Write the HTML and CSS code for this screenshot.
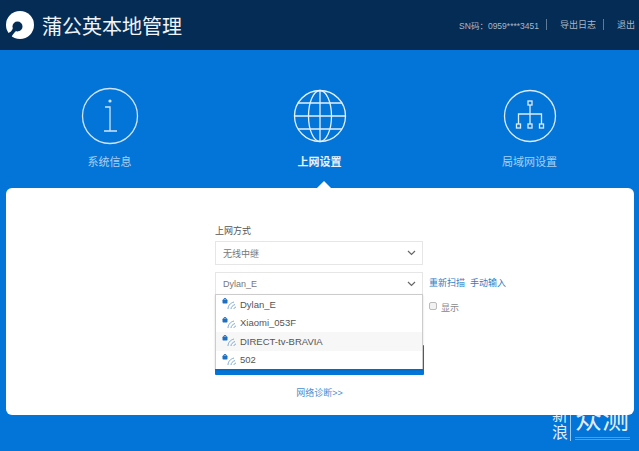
FILE: index.html
```html
<!DOCTYPE html>
<html lang="zh-CN">
<head>
    <meta charset="UTF-8">
    <meta name="viewport" content="width=device-width, initial-scale=1.0">
    <title>蒲公英本地管理</title>
    <link rel="stylesheet" href="styles.css">
</head>
<body>

<!-- 顶部栏 -->
<header class="topbar">
    <div class="brand">
        <svg class="logo" width="28" height="28" viewBox="0 0 28 28">
            <circle cx="14" cy="14" r="14" fill="#fff"/>
            <circle cx="11.500" cy="15.500" r="5" fill="#042c55"/>
            <path d="M7 17c-1 3-3 5-6.500 5.500L5 27c1-3 3-5 5-7z" fill="#042c55"/>
            <path d="M9 21c2 0 4 0 5-1-1 2-3 4-5 4z" fill="#fff"/>
        </svg>
        <span class="brand-name">蒲公英本地管理</span>
    </div>
    <div class="top-links">
        <span class="sn">SN码：0959****3451</span>
        <span class="sep"></span>
        <span>导出日志</span>
        <span class="sep"></span>
        <span>退出</span>
    </div>
</header>

<!-- 导航 -->
<nav class="nav">
    <div class="nav-item">
        <svg width="58" height="58" viewBox="0 0 58 58" fill="none" stroke="#cfe4f7" stroke-width="1.3">
            <circle cx="29" cy="29" r="27.500"/>
            <circle cx="29" cy="14" r="1.600" fill="#cfe4f7" stroke="none"/>
            <path d="M24 20h5v24M23 44h13"/>
        </svg>
        <span>系统信息</span>
    </div>
    <div class="nav-item active">
        <svg width="54" height="54" viewBox="0 0 54 54" fill="none" stroke="#e4f0fb" stroke-width="1.3">
            <circle cx="27" cy="27" r="25.500"/>
            <ellipse cx="27" cy="27" rx="11.500" ry="25.500"/>
            <path d="M27 1.500v51M1.500 27h51M5 14h44M5 40h44"/>
        </svg>
        <span>上网设置</span>
    </div>
    <div class="nav-item">
        <svg width="54" height="54" viewBox="0 0 54 54" fill="none" stroke="#dcebf9" stroke-width="1.3">
            <circle cx="27" cy="27" r="25.500"/>
            <rect x="25" y="12" width="4" height="4"/>
            <path d="M27 16v19M15.500 35v-10h23v10"/>
            <rect x="13.500" y="35" width="4" height="4"/>
            <rect x="25" y="35" width="4" height="4"/>
            <rect x="36.500" y="35" width="4" height="4"/>
        </svg>
        <span>局域网设置</span>
    </div>
</nav>

<!-- 主卡片 -->
<main class="card">
    <div class="form">
        <label class="field-label">上网方式</label>
        <div class="select">
            <span>无线中继</span>
            <svg class="chevron" width="9" height="6" viewBox="0 0 9 6"><path d="M1 1l3.500 3.500L8 1" fill="none" stroke="#666" stroke-width="1.200"/></svg>
        </div>

        <div class="wifi-box">
            <div class="select select-open">
                <span>Dylan_E</span>
                <svg class="chevron" width="9" height="6" viewBox="0 0 9 6"><path d="M1 1l3.500 3.500L8 1" fill="none" stroke="#666" stroke-width="1.200"/></svg>
            </div>
            <div class="side-links">
                <a>重新扫描</a>
                <a>手动输入</a>
            </div>

            <div class="password-row">
                <span class="checkbox"></span>
                <span>显示</span>
            </div>

            <button class="submit"></button>

            <ul class="dropdown">
                <li>
                    <svg class="wifi" width="17" height="13" viewBox="0 0 17 13"><rect x="0.500" y="2.500" width="5" height="4" rx="0.800" fill="#1f6fc0"/><path d="M1.600 2.800a1.400 1.400 0 0 1 2.800 0" fill="none" stroke="#1f6fc0" stroke-width="0.900"/><path d="M6 12c0-3 2-6 6-7M9 12c0-2 1.500-3.500 4-4.500M12 12c0-1 .5-1.500 2-2" fill="none" stroke="#7fa9d2" stroke-width="1"/></svg>
                    <span>Dylan_E</span>
                </li>
                <li>
                    <svg class="wifi" width="17" height="13" viewBox="0 0 17 13"><rect x="0.500" y="2.500" width="5" height="4" rx="0.800" fill="#1f6fc0"/><path d="M1.600 2.800a1.400 1.400 0 0 1 2.800 0" fill="none" stroke="#1f6fc0" stroke-width="0.900"/><path d="M6 12c0-3 2-6 6-7M9 12c0-2 1.500-3.500 4-4.500M12 12c0-1 .5-1.500 2-2" fill="none" stroke="#7fa9d2" stroke-width="1"/></svg>
                    <span>Xiaomi_053F</span>
                </li>
                <li class="hover">
                    <svg class="wifi" width="17" height="13" viewBox="0 0 17 13"><rect x="0.500" y="2.500" width="5" height="4" rx="0.800" fill="#1f6fc0"/><path d="M1.600 2.800a1.400 1.400 0 0 1 2.800 0" fill="none" stroke="#1f6fc0" stroke-width="0.900"/><path d="M6 12c0-3 2-6 6-7M9 12c0-2 1.500-3.500 4-4.500M12 12c0-1 .5-1.500 2-2" fill="none" stroke="#7fa9d2" stroke-width="1"/></svg>
                    <span>DIRECT-tv-BRAVIA</span>
                </li>
                <li>
                    <svg class="wifi" width="17" height="13" viewBox="0 0 17 13"><rect x="0.500" y="2.500" width="5" height="4" rx="0.800" fill="#1f6fc0"/><path d="M1.600 2.800a1.400 1.400 0 0 1 2.800 0" fill="none" stroke="#1f6fc0" stroke-width="0.900"/><path d="M6 12c0-3 2-6 6-7M9 12c0-2 1.500-3.500 4-4.500M12 12c0-1 .5-1.500 2-2" fill="none" stroke="#7fa9d2" stroke-width="1"/></svg>
                    <span>502</span>
                </li>
            </ul>
        </div>

        <a class="diag">网络诊断&gt;&gt;</a>
    </div>
</main>

<!-- 水印 -->
<div class="watermark">
    <div class="wm-small">新<br>浪</div>
    <div class="wm-big">众测</div>
</div>

</body>
</html>
```

FILE: styles.css
```css
* {
    box-sizing: border-box;
}
body {
    margin: 0;
    height: 451px;
    overflow: hidden;
    position: relative;
    background-color: #0475d8;
    font-family: "Liberation Sans", "Noto Sans CJK SC", sans-serif;
}
.topbar {
    height: 50px;
    display: flex;
    justify-content: space-between;
    align-items: center;
    padding: 0 4px 0 6px;
    background-color: #042c55;
}
.brand {
    display: flex;
    align-items: center;
    gap: 8px;
}
.brand-name {
    font-size: 20px;
    color: #f0f4f8;
}
.top-links {
    display: flex;
    align-items: center;
    font-size: 9px;
    color: #aab7c6;
    margin-top: -1px;
}
.top-links .sn {
    font-size: 8.500px;
}
.sep {
    width: 1px;
    height: 11px;
    margin: 0 13px 0 7px;
    background-color: #5f7a96;
}
.nav {
    height: 138px;
    display: grid;
    grid-template-columns: repeat(3, 210px);
    justify-content: center;
}
.nav-item {
    height: 138px;
    display: flex;
    flex-direction: column;
    align-items: center;
    padding-top: 37px;
    font-size: 11px;
    color: #a9d0f2;
}
.nav-item svg {
    height: 58px;
    flex: none;
}
.nav-item span {
    margin-top: 8px;
}
.nav-item.active {
    position: relative;
    color: #e8f2fb;
    font-weight: bold;
}
.nav-item.active::after {
    content: "";
    position: absolute;
    left: 102px;
    bottom: 0;
    border: 7px solid transparent;
    border-top: 0;
    border-bottom-color: #fff;
}
.card {
    height: 227px;
    margin: 0 5px 0 6px;
    padding-top: 36px;
    background-color: #fff;
    border-radius: 6px;
}
.form {
    width: 209px;
    margin-left: 209px;
    font-size: 9px;
    color: #666;
}
.field-label {
    display: block;
    height: 17px;
    color: #555;
}
.select {
    width: 208px;
    height: 24px;
    display: flex;
    justify-content: space-between;
    align-items: center;
    padding: 0 6px 0 7px;
    border: 1px solid #e6e6e6;
    background-color: #fff;
    color: #777;
}
.wifi-box {
    position: relative;
    margin-top: 7px;
    height: 103px;
}
.select-open {
    height: 23px;
    border-bottom-color: #ccc;
}
.side-links {
    position: absolute;
    left: 214px;
    top: 4px;
    display: flex;
    gap: 5px;
    white-space: nowrap;
}
.side-links a {
    color: #2f7cc6;
}
.password-row {
    position: absolute;
    left: 214px;
    top: 29px;
    display: flex;
    align-items: center;
    gap: 4px;
    color: #888;
    white-space: nowrap;
}
.checkbox {
    width: 8px;
    height: 8px;
    margin-top: -4px;
    border: 1px solid #bbb;
    border-radius: 2px;
    background-color: #f2f2f2;
}
.submit {
    position: absolute;
    left: 0;
    top: 73px;
    width: 209px;
    height: 30px;
    border: 0;
    border-radius: 1px;
    background-color: #0475d8;
}
.dropdown {
    position: absolute;
    left: 0;
    top: 22px;
    width: 208px;
    margin: 0;
    padding: 0;
    list-style: none;
    background-color: #fff;
    border: 1px solid #ccc;
    border-bottom: 0;
    box-shadow: 0 1px 2px rgba(0, 0, 0, 0.15);
}
.dropdown li {
    height: 18.500px;
    display: flex;
    align-items: center;
    gap: 1px;
    padding-left: 6px;
    font-size: 9.500px;
    color: #555;
}
.dropdown li.hover {
    background-color: #f7f7f7;
}
.wifi {
    flex: none;
    margin-top: -1px;
}
.diag {
    display: block;
    margin-top: 11px;
    text-align: center;
    color: #4b8fd0;
}
.watermark {
    position: absolute;
    left: 552px;
    top: 407px;
    display: flex;
    color: rgba(255, 255, 255, 0.9);
}
.wm-small {
    width: 19px;
    height: 34px;
    font-size: 16px;
    line-height: 17px;
    border-right: 1px solid rgba(255, 255, 255, 0.6);
}
.wm-big {
    margin-left: 4px;
    height: 33px;
    width: 55px;
    font-size: 27px;
    line-height: 27px;
    font-weight: 400;
    border-bottom: 3px double rgba(255, 255, 255, 0.3);
    white-space: nowrap;
}
```
